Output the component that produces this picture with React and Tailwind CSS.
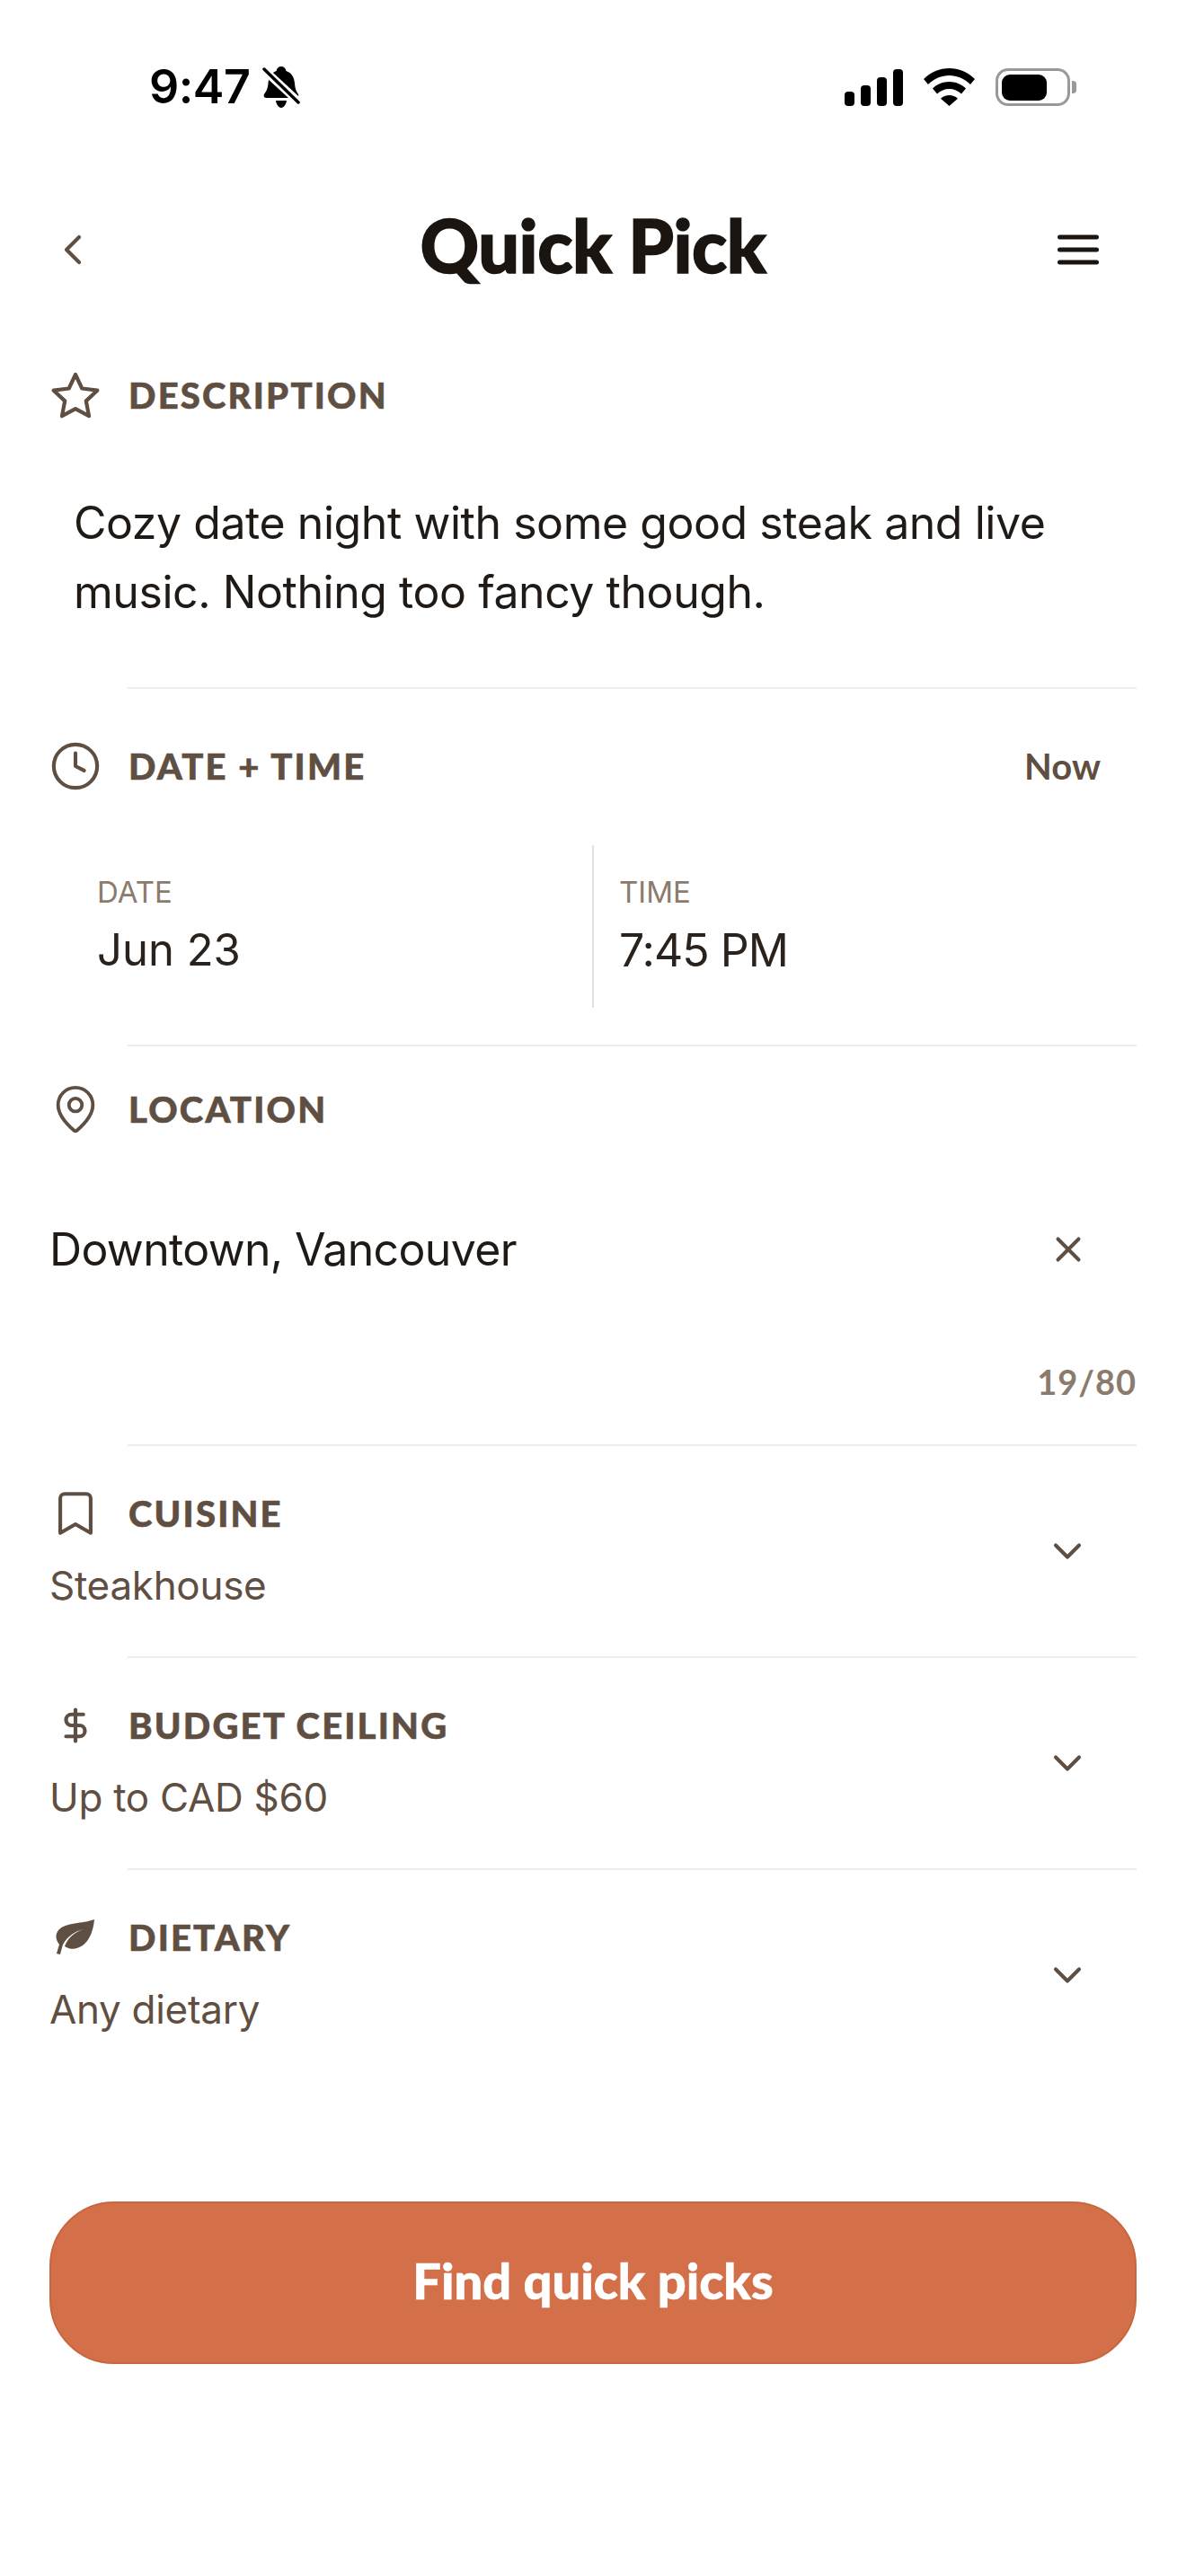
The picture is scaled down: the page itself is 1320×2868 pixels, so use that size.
import { Bookmark, ChevronDown, Clock, DollarSign, MapPin, X } from "lucide-react";

function StatusBar() {
  return (
    <div className="flex h-[194px] items-center justify-between pl-[166px] pr-[122px] font-['Inter',sans-serif] text-black">
      <div className="flex items-center gap-[14px]">
        <span className="text-[52px] font-semibold leading-none tracking-[-0.5px]">9:47</span>
        <svg width="42" height="46" viewBox="0 0 42 46">
          <path d="M21 0c3 0 5 2 5.500 5 6 2 9 7 9.500 14 .5 6 2 9 4 12 .8 2-.5 4-3 4H5c-3 0-4-2-3-4 2-3 4-6 4.500-12C7 12 10 7 15.500 5 16 2 18 0 21 0zM15 38h12c-.5 4-3 8-6 8s-5.500-4-6-8z" fill="#000" />
          <path d="M1 3l40 37" stroke="#fff" strokeWidth="9" />
          <path d="M2 3l38 37" stroke="#000" strokeWidth="3.500" strokeLinecap="round" />
        </svg>
      </div>
      <div className="flex items-center gap-[23px]">
        <svg width="65" height="41" viewBox="0 0 65 41" fill="#000">
          <rect x="0" y="25" width="11" height="16" rx="4" />
          <rect x="18" y="18" width="11" height="23" rx="4" />
          <rect x="36" y="9" width="11" height="32" rx="4" />
          <rect x="54" y="0" width="11" height="41" rx="4" />
        </svg>
        <svg width="57" height="42" viewBox="0 0 57 42" fill="#000">
          <path d="M28.500 0C39 0 49 4 57 12l-5 6C45.500 11.500 37 8 28.500 8S11.500 11.500 5 18l-5-6C8 4 18 0 28.500 0z" />
          <path d="M28.500 15c7 0 13.500 2.700 18.500 7.500l-5 6c-3.500-3.500-8.500-5.500-13.500-5.500S18.500 25 15 28.500l-5-6C15 17.700 21.500 15 28.500 15z" />
          <path d="M28.500 30c3.500 0 6.800 1.300 9.500 3.700L28.500 42 19 33.700c2.700-2.400 6-3.700 9.500-3.700z" />
        </svg>
        <div className="flex items-center gap-[2px]">
          <div className="flex h-[42px] w-[83px] items-center rounded-[14px] border-[3px] border-[#999999] pl-[4px]">
            <div className="h-[29px] w-[50px] rounded-[9px] bg-black" />
          </div>
          <div className="h-[14px] w-[5px] rounded-r-[4px] bg-[#999999]" />
        </div>
      </div>
    </div>
  );
}

function StarIcon() {
  return (
    <svg width="54" height="52" viewBox="0 0 54 52" fill="none" stroke="#5f4f42" strokeWidth="4.200" strokeLinejoin="round">
      <path d="M27 3l7.300 15.500 17 2.200-12.500 11.700 3.200 16.800L27 41.100l-15 8.100 3.200-16.800L2.700 20.700l17-2.200z" />
    </svg>
  );
}

function Leaf() {
  return (
    <svg width="44" height="40" viewBox="0 0 44 40" fill="#5f4f42">
      <path d="M43 0c-1 12-5 23-13 29-6 4-13 5-18 2l-2-1c3-9 11-16 21-19-10 2-18 8-23 17-1 3-2 7-3 11l-4-1c1-4 2-7 3-10C0 23-1 17 3 12 11 3 30 5 43 0z" />
    </svg>
  );
}

function Label({ icon, children, className = "" }) {
  return (
    <div className={`flex items-center ${className}`}>
      <div className="flex w-[58px] shrink-0 justify-center">{icon}</div>
      <span className="ml-[30px] font-['Lato',sans-serif] text-[40px] font-black leading-none tracking-[2.2px] text-[#5f4f42] [-webkit-text-stroke:0.6px_#5f4f42]">{children}</span>
    </div>
  );
}

function Divider() {
  return <div className="ml-[87px] h-[2px] bg-[#ededeb]" />;
}

function SelectRow({ icon, label, value, last }) {
  return (
    <>
      <div className="flex h-[234px] items-center justify-between">
        <div className="self-start pt-[55px]">
          <Label icon={icon} className="h-[40px]">{label}</Label>
          <p className="mt-[31px] font-['Inter',sans-serif] text-[44px] leading-[58px] tracking-[-0.3px] text-[#5f4f42]">{value}</p>
        </div>
        <ChevronDown size={52} strokeWidth={1.900} className="mr-[51px] text-[#5f4f42]" />
      </div>
      {!last && <Divider />}
    </>
  );
}

export default function App() {
  const iconProps = { size: 58, strokeWidth: 1.700, className: "text-[#5f4f42]" };
  return (
    <div className="min-h-[2868px] bg-white">
      <StatusBar />
      <div className="px-[55px]">
        <header className="flex h-[156px] items-center justify-between">
          <div className="flex w-[200px] shrink-0 pl-[15px]">
            <svg width="22" height="36" viewBox="0 0 22 36" fill="none" stroke="#5f4f42" strokeWidth="4.200" strokeLinecap="round" strokeLinejoin="round" className="mt-[12px]">
              <path d="M18 4L4 18l14 14" />
            </svg>
          </div>
          <h1 className="font-['Lato',sans-serif] text-[81px] font-black leading-none tracking-[-0.5px] text-[#1a1510] [-webkit-text-stroke:1.5px_#1a1510]">Quick Pick</h1>
          <div className="flex w-[200px] shrink-0 justify-end pr-[42px]">
            <svg width="46" height="34" viewBox="0 0 46 34" stroke="#1a1510" strokeWidth="5" strokeLinecap="round" className="mt-[12px]">
              <path d="M2.500 3h41M2.500 17h41M2.500 31h41" />
            </svg>
          </div>
        </header>

        <Label icon={<StarIcon />} className="mt-[60px] h-[60px]">DESCRIPTION</Label>
        <p className="mb-[67px] mt-[74px] pl-[27px] pr-[80px] font-['Inter',sans-serif] text-[50px] leading-[77px] tracking-[-0.45px] text-[#1f1a16]">
          Cozy date night with some good steak and live music. Nothing too fancy though.
        </p>
        <Divider />

        <div className="flex h-[174px] items-start justify-between pt-[56px]">
          <Label icon={<Clock {...iconProps} />} className="h-[60px]">DATE + TIME</Label>
          <span className="mr-[40px] mt-[8px] font-['Lato',sans-serif] text-[40px] font-bold leading-[44px] text-[#5f4f42]">Now</span>
        </div>
        <div className="flex h-[181px]">
          <div className="w-[606px] border-r-2 border-[#e4e2df] pl-[53px] pt-[32px] font-['Inter',sans-serif]">
            <div className="text-[33px] leading-[40px] text-[#8b7b6d]">DATE</div>
            <div className="mt-[15px] text-[49px] leading-[60px] text-[#2a221c]">Jun 23</div>
          </div>
          <div className="pl-[28px] pt-[32px] font-['Inter',sans-serif]">
            <div className="text-[33px] leading-[40px] text-[#8b7b6d]">TIME</div>
            <div className="mt-[15px] text-[50px] leading-[60px] tracking-[-1px] text-[#2a221c]">7:45 PM</div>
          </div>
        </div>
        <div className="h-[41px]" />
        <Divider />

        <Label icon={<MapPin {...iconProps} size={62} strokeWidth={1.600} />} className="mt-[40px] h-[60px]">LOCATION</Label>
        <div className="mt-[96px] flex h-[60px] items-center justify-between">
          <span className="font-['Inter',sans-serif] text-[50px] leading-none tracking-[-0.65px] text-[#1f1a16]">Downtown, Vancouver</span>
          <X size={46} strokeWidth={2.100} className="mr-[53px] text-[#5f4f42]" />
        </div>
        <div className="mt-[97px] h-[40px] text-right font-['Lato',sans-serif] text-[38px] font-bold leading-[40px] tracking-[1px] text-[#8b7b6d]">19/80</div>
        <div className="h-[50px]" />
        <Divider />

        <SelectRow icon={<Bookmark {...iconProps} />} label="CUISINE" value="Steakhouse" />
        <SelectRow icon={<DollarSign {...iconProps} size={42} strokeWidth={2.400} />} label="BUDGET CEILING" value="Up to CAD $60" />
        <SelectRow icon={<Leaf />} label="DIETARY" value="Any dietary" last />

        <button className="mt-[135px] flex h-[181px] w-full items-center justify-center rounded-[72px] border-2 border-[#c9663f] bg-[#d47049] pb-[5px] font-['Lato',sans-serif] text-[56px] font-black text-white [-webkit-text-stroke:0.6px_#ffffff]">
          Find quick picks
        </button>
      </div>
    </div>
  );
}
